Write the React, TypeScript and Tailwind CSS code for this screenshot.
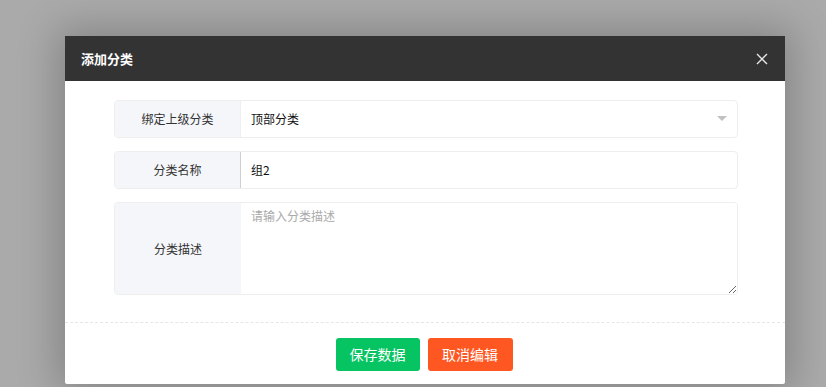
import React from "react";

const font = { fontFamily: '"Noto Sans CJK SC", "Noto Sans", sans-serif' };

export default function App() {
  return (
    <div className="w-[826px] h-[387px] bg-[#aaaaaa] overflow-hidden pt-[36px] pl-[65px]" style={font}>
      <div className="w-[720px] h-[348px] bg-white rounded-b-[2px] shadow-[0_0_40px_8px_rgba(0,0,0,0.22)] flex flex-col">
        <div className="h-[45px] bg-[#333333] flex items-center justify-between pl-[16px] pr-[16px]">
          <span className="text-white text-[13px] font-bold">添加分类</span>
          <svg width="12" height="12" viewBox="0 0 12 12" className="mr-[1px]">
            <path d="M1 1 L11 11 M11 1 L1 11" stroke="#e6e6e6" strokeWidth="1.4" />
          </svg>
        </div>
        <div className="flex flex-col gap-[13px] pt-[19px] pb-[27px] pl-[49px] pr-[47px]">
          <div className="flex h-[38px] border border-[#eeeeee] rounded-[4px] overflow-hidden">
            <div className="w-[126px] bg-[#f5f6fa] border-r border-[#eeeeee] flex items-center justify-center text-[12px] text-[#333]">
              绑定上级分类
            </div>
            <div className="flex-1 flex items-center justify-between pl-[10px] pr-[10px] text-[12px] text-[#111]">
              <span>顶部分类</span>
              <svg width="10" height="6" viewBox="0 0 10 6">
                <path d="M0 0 L10 0 L5 5 Z" fill="#c2c2c2" />
              </svg>
            </div>
          </div>
          <div className="flex h-[38px] border border-[#eeeeee] rounded-[4px] overflow-hidden">
            <div className="w-[126px] bg-[#f5f6fa] border-r border-[#cfcfcf] flex items-center justify-center text-[12px] text-[#333]">
              分类名称
            </div>
            <div className="flex-1 flex items-center pl-[10px] text-[12px] text-[#111]">组2</div>
          </div>
          <div className="flex h-[93px] border border-[#eeeeee] rounded-[4px] overflow-hidden">
            <div className="w-[126px] bg-[#f5f6fa] flex items-center justify-center text-[12px] text-[#333]">
              分类描述
            </div>
            <textarea
              className="flex-1 resize outline-none pl-[10px] pt-[4px] text-[12px] text-[#111] placeholder:text-[#aaaaaa] bg-white"
              placeholder="请输入分类描述"
              style={font}
            />
          </div>
        </div>
        <div className="border-t border-dashed border-[#e6e6e6] flex justify-center gap-[8px] pt-[15px] pr-[2px]">
          <button className="w-[84px] h-[33px] bg-[#07c463] text-white text-[14px] rounded-[3px]" style={font}>
            保存数据
          </button>
          <button className="w-[85px] h-[33px] bg-[#ff5722] text-white text-[14px] rounded-[3px]" style={font}>
            取消编辑
          </button>
        </div>
      </div>
    </div>
  );
}
